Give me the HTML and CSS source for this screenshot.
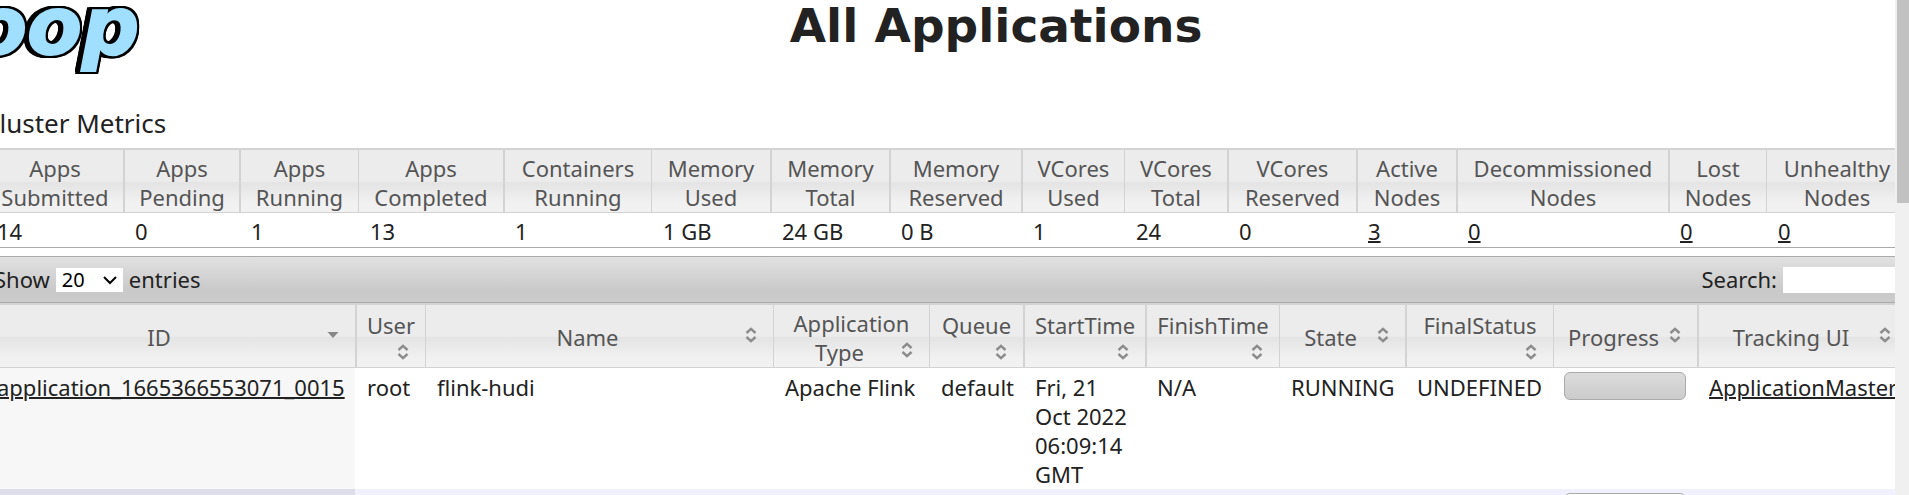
FILE: index.html
```html
<!DOCTYPE html>
<html lang="en">
<head>
<meta charset="utf-8">
<title>All Applications</title>
<link rel="stylesheet" href="styles.css">
</head>
<body>
<svg class="defs" aria-hidden="true">
  <symbol id="sort-both" viewBox="0 0 12 16"><path d="M1.5 6 6 1.8 10.500 6M1.500 10 6 14.200 10.500 10" fill="none" stroke="#8c8c8c" stroke-width="2.400"/></symbol>
  <symbol id="sort-down" viewBox="0 0 12 16"><path d="M.5 5h11L6 11z" fill="#888"/></symbol>
</svg>
<div class="window">
  <main class="viewport">
    <div class="page">
      <header class="banner">
        <svg class="logo" viewBox="-15 0 157 80" role="img" aria-label="Hadoop">
          <text class="logo-text" x="-28" y="54">oop</text>
        </svg>
        <h1 class="title">All Applications</h1>
      </header>

      <h3 class="section">Cluster Metrics</h3>
      <table class="grid metrics">
        <colgroup>
          <col class="w138"><col class="w116"><col class="w119"><col class="w145"><col class="w148"><col class="w119"><col class="w119"><col class="w132"><col class="w103"><col class="w103"><col class="w129"><col class="w100"><col class="w212"><col class="w98"><col>
        </colgroup>
        <thead>
          <tr>
            <th>Apps<br>Submitted</th><th>Apps<br>Pending</th><th>Apps<br>Running</th><th class="thin">Apps<br>Completed</th><th>Containers<br>Running</th><th class="thin">Memory<br>Used</th><th>Memory<br>Total</th><th>Memory<br>Reserved</th><th>VCores<br>Used</th><th class="thin">VCores<br>Total</th><th>VCores<br>Reserved</th><th>Active<br>Nodes</th><th>Decommissioned<br>Nodes</th><th>Lost<br>Nodes</th><th class="thin">Unhealthy<br>Nodes</th>
          </tr>
        </thead>
        <tbody>
          <tr>
            <td>14</td><td>0</td><td>1</td><td>13</td><td>1</td><td>1 GB</td><td>24 GB</td><td>0 B</td><td>1</td><td>24</td><td>0</td><td><a href="#active">3</a></td><td><a href="#decommissioned">0</a></td><td><a href="#lost">0</a></td><td><a href="#unhealthy">0</a></td>
          </tr>
        </tbody>
      </table>

      <div class="toolbar">
        <label class="field">Show
          <span class="picker">
            <select class="length"><option>10</option><option selected>20</option><option>50</option></select>
            <svg class="chevron" viewBox="0 0 14 10" aria-hidden="true"><path d="M1 2 7 8 13 2" fill="none" stroke="#000" stroke-width="2"/></svg>
          </span>
          entries</label>
        <label class="field">Search: <input class="search" type="text"></label>
      </div>

      <table class="grid apps">
        <colgroup>
          <col class="w370"><col class="w70"><col><col class="w156"><col class="w94"><col class="w122"><col class="w134"><col class="w126"><col class="w148"><col class="w144"><col class="w210">
        </colgroup>
        <thead>
          <tr>
            <th><div class="head"><span class="label">ID</span><svg class="sort"><use href="#sort-down"/></svg></div></th>
            <th><div class="head stack"><span class="label">User</span><svg class="sort"><use href="#sort-both"/></svg></div></th>
            <th class="thin"><div class="head"><span class="label">Name</span><svg class="sort"><use href="#sort-both"/></svg></div></th>
            <th class="thin"><div class="label">Application</div><div class="head"><span class="label">Type</span><svg class="sort"><use href="#sort-both"/></svg></div></th>
            <th class="thin"><div class="head stack"><span class="label">Queue</span><svg class="sort"><use href="#sort-both"/></svg></div></th>
            <th><div class="head stack"><span class="label">StartTime</span><svg class="sort"><use href="#sort-both"/></svg></div></th>
            <th><div class="head stack"><span class="label">FinishTime</span><svg class="sort"><use href="#sort-both"/></svg></div></th>
            <th class="thin"><div class="head"><span class="label">State</span><svg class="sort"><use href="#sort-both"/></svg></div></th>
            <th><div class="head stack"><span class="label">FinalStatus</span><svg class="sort"><use href="#sort-both"/></svg></div></th>
            <th class="thin"><div class="head"><span class="label">Progress</span><svg class="sort"><use href="#sort-both"/></svg></div></th>
            <th><div class="head"><span class="label">Tracking UI</span><svg class="sort"><use href="#sort-both"/></svg></div></th>
          </tr>
        </thead>
        <tbody>
          <tr>
            <td class="sorted"><a href="#app15">application_1665366553071_0015</a></td>
            <td>root</td>
            <td>flink-hudi</td>
            <td>Apache Flink</td>
            <td>default</td>
            <td class="time">Fri, 21 Oct 2022 06:09:14 GMT</td>
            <td>N/A</td>
            <td>RUNNING</td>
            <td>UNDEFINED</td>
            <td class="meter"><div class="bar bar-empty" role="progressbar" aria-label="Progress"></div></td>
            <td><a href="#master">ApplicationMaster</a></td>
          </tr>
          <tr class="even">
            <td class="sorted"></td><td></td><td></td><td></td><td></td><td></td><td></td><td></td><td></td>
            <td class="meter"><div class="bar" role="progressbar" aria-label="Progress"></div></td>
            <td></td>
          </tr>
        </tbody>
      </table>
    </div>
  </main>
  <div class="scrollbar"><div class="thumb"></div></div>
</div>
</body>
</html>
```
FILE: styles.css
```css
* { box-sizing: border-box; }

body {
  margin: 0;
  background: #fff;
  color: #222;
  font: 22px/29px "Noto Sans", "Segoe UI", sans-serif;
}

.defs { display: none; }

.window {
  display: flex;
  height: 100vh;
  overflow: hidden;
}

.viewport {
  flex: 1;
  min-width: 0;
  overflow: hidden;
}

/* The page is scrolled sideways, so it runs past both edges. */
.page { margin: 0 -12px 0 -15px; }

.banner {
  display: flex;
  height: 105px;
  padding-right: 57px;
}

.logo {
  flex: none;
  width: 157px;
  height: 80px;
}

.logo-text {
  fill: #a0dfff;
  stroke: #a0dfff;
  stroke-width: 2px;
  font: italic bold 80px "DejaVu Sans", Verdana, sans-serif;
  filter:
    drop-shadow(2px 0 0 #000)
    drop-shadow(-2px 0 0 #000)
    drop-shadow(0 2px 0 #000)
    drop-shadow(0 -2px 0 #000)
    drop-shadow(-3px 0 0 #000);
}

.title {
  flex: 1;
  margin: 0;
  font: bold 47px/52px "DejaVu Sans", Verdana, sans-serif;
  text-align: center;
}

.section {
  margin: 0 0 7px -2px;
  font-size: 26px;
  font-weight: 400;
  line-height: 36px;
}

.grid {
  width: 100%;
  table-layout: fixed;
  border-collapse: separate;
  border-spacing: 0;
}

.grid th {
  height: 65px;
  padding: 4px 10px 0;
  border: solid #d3d3d3;
  border-width: 2px 0 1px 2px;
  background: linear-gradient(#ececec 0, #ececec 50%, #e4e4e4 53%, #f1f1f1 85%);
  color: #555;
  font-weight: 400;
  text-align: center;
  white-space: nowrap;
}

.grid .thin { border-left-width: 1px; }

.grid td {
  padding: 4px 10px 1px 12px;
  vertical-align: top;
  white-space: nowrap;
}

.grid a {
  color: #222;
  text-decoration: underline 2px;
}

.metrics { border-bottom: 1px solid #aaa; }

.w70 { width: 70px; }
.w94 { width: 94px; }
.w98 { width: 98px; }
.w100 { width: 100px; }
.w103 { width: 103px; }
.w116 { width: 116px; }
.w119 { width: 119px; }
.w122 { width: 122px; }
.w126 { width: 126px; }
.w129 { width: 129px; }
.w132 { width: 132px; }
.w134 { width: 134px; }
.w138 { width: 138px; }
.w144 { width: 144px; }
.w145 { width: 145px; }
.w148 { width: 148px; }
.w156 { width: 156px; }
.w210 { width: 210px; }
.w212 { width: 212px; }
.w370 { width: 370px; }

.toolbar {
  display: flex;
  align-items: center;
  justify-content: space-between;
  height: 47px;
  margin-top: 8px;
  padding: 0 8px;
  border: 1px solid #aaa;
  background: linear-gradient(#e1e1e1, #c9c9c9 75%, #cbcbcb);
}

.field {
  display: flex;
  align-items: center;
  gap: 6px;
}

.picker {
  position: relative;
  display: flex;
}

.length {
  width: 67px;
  height: 24px;
  padding: 0 6px;
  border: 0;
  background: #fff;
  color: #000;
  font: 20px/24px "Noto Sans", "Segoe UI", sans-serif;
  appearance: none;
}

.chevron {
  position: absolute;
  top: 7px;
  right: 6px;
  width: 14px;
  height: 10px;
  pointer-events: none;
}

.search {
  width: 115px;
  height: 26px;
  padding: 0 4px;
  border: 0;
  background: #fff;
  font: inherit;
}

.head {
  display: flex;
  align-items: center;
}

.label { flex: 1; }

.sort {
  flex: none;
  width: 12px;
  height: 16px;
  margin: 0 6px 5px;
}

.stack {
  flex-direction: column;
  align-items: stretch;
  gap: 4px;
}

.stack .sort { align-self: flex-end; }

.apps th { padding-top: 3px; }
.apps td { padding: 5px 10px 0 12px; }
.apps .time { white-space: normal; }
.apps .sorted { background: #f7f7f7; }
.apps .even { background: #f0f0ff; }
.apps .even .sorted { background: #dedeea; }
.apps .meter { padding: 4px 11px; }

.bar {
  height: 28px;
  border: 1px solid #aaa;
  border-radius: 6px;
  background: #fff;
}

.bar-empty { background: linear-gradient(#dcdcdc, #cbcbcb); }

.scrollbar {
  flex: none;
  width: 14px;
  padding-left: 2px;
  background: #f0f0f0;
}

.thumb {
  height: 203px;
  background: #c1c1c1;
}
```
